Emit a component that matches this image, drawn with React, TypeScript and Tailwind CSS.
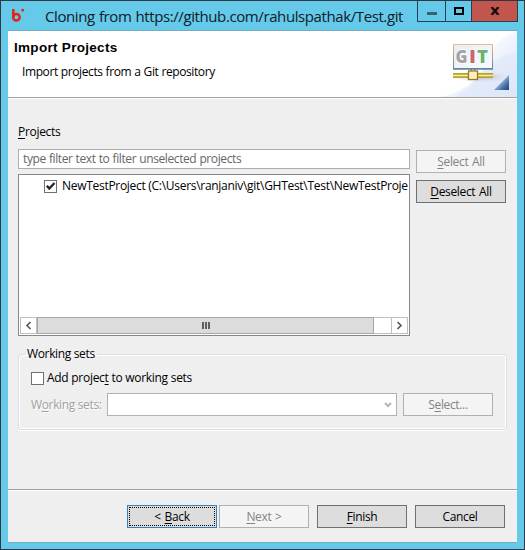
import type { ReactNode } from "react";

function Btn({ children, disabled = false, focus = false }: { children: ReactNode; disabled?: boolean; focus?: boolean }) {
  const tone = disabled
    ? "border-[#adb2b5] bg-[#f4f4f4] text-[#838383]"
    : focus
      ? "border-[#3c7fb1] bg-[#dddddd] text-black"
      : "border-[#707070] bg-[#dddddd] text-black";
  return (
    <button className={`relative flex h-[23px] w-[90px] shrink-0 items-center justify-center border ${tone}`}>
      {focus && <span className="absolute inset-px border border-dotted border-black" />}
      <span className="whitespace-pre tracking-[-0.35px] [word-spacing:1px]">{children}</span>
    </button>
  );
}

const U = ({ children }: { children: ReactNode }) => (
  <span className="underline decoration-1 underline-offset-2">{children}</span>
);

function Check({ checked = false }: { checked?: boolean }) {
  return (
    <span className="flex h-[13px] w-[13px] shrink-0 items-center justify-center border border-[#707070] bg-white">
      {checked && (
        <svg width="11" height="11" viewBox="0 0 11 11">
          <path d="M1.8 4.7 4.3 7.5 9.5 2" fill="none" stroke="#222" strokeWidth="2.3" />
        </svg>
      )}
    </span>
  );
}

function TitleBar() {
  return (
    <header className="flex h-[29px] items-start">
      <svg className="ml-[9px] mt-[7px] shrink-0" width="18" height="16" viewBox="0 0 18 16">
        <path d="M3.3 1v8.5" stroke="#e1251b" strokeWidth="2.6" />
        <circle cx="6.4" cy="9.2" r="3.3" fill="none" stroke="#e1251b" strokeWidth="2.5" />
        <circle cx="12.7" cy="2.2" r="1.4" fill="#e1251b" />
      </svg>
      <h1 className="ml-[17px] mt-[5px] w-[372px] whitespace-nowrap text-[15px] leading-[20px] tracking-[-0.4px] text-[#10202a] [word-spacing:0.6px]">
        Cloning from https://github.com/rahulspathak/Test.git
      </h1>
      <div className="flex h-[21px] w-[101px] shrink-0 border-x border-b border-[#26404d]">
        <div className="flex w-[27px] justify-center pt-[11px]">
          <i className="h-[3px] w-[10px] bg-[#356373]" />
        </div>
        <div className="flex w-[26px] justify-center border-l border-[#26404d] pt-[6px]">
          <i className="h-[8px] w-[10px] border-2 border-black" />
        </div>
        <div className="flex w-[46px] justify-center border-l border-[#26404d] bg-[#c2564f] pt-[6px]">
          <svg width="10" height="8" viewBox="0 0 10 8">
            <path d="M1.5 0 8.5 8M8.5 0 1.5 8" stroke="#111" strokeWidth="2.4" />
          </svg>
        </div>
      </div>
    </header>
  );
}

function GitBanner() {
  return (
    <svg className="shrink-0" width="77" height="66" viewBox="440 31 77 66">
      <defs>
        <linearGradient id="sky" x1="0" y1="0" x2="1" y2="1">
          <stop offset="0.3" stopColor="#fff" />
          <stop offset="0.65" stopColor="#eaeffa" />
          <stop offset="1" stopColor="#e2e9f8" />
        </linearGradient>
        <linearGradient id="frame" x1="0" y1="0" x2="0" y2="1">
          <stop offset="0" stopColor="#edbd80" />
          <stop offset="1" stopColor="#608698" />
        </linearGradient>
        <linearGradient id="pane" x1="0" y1="0" x2="1" y2="1">
          <stop offset="0" stopColor="#e4edf7" />
          <stop offset="1" stopColor="#f9fbfe" />
        </linearGradient>
        <linearGradient id="corner" x1="0" y1="0" x2="1" y2="1">
          <stop offset="0.3" stopColor="#b8dcf0" />
          <stop offset="0.75" stopColor="#4169a3" />
          <stop offset="1" stopColor="#24447c" />
        </linearGradient>
        <radialGradient id="shade">
          <stop offset="0" stopColor="#b8b4c6" />
          <stop offset="1" stopColor="#dfe3f0" stopOpacity="0" />
        </radialGradient>
      </defs>
      <path d="M517 31Q498 38 490 52Q480 89 440 97H517Z" fill="url(#sky)" />
      <path d="M517 51Q500 55 488 66Q474 86 455 97H517Z" fill="#d8e2f5" opacity=".35" />
      <ellipse cx="482" cy="77" rx="31" ry="6" fill="url(#shade)" />
      <rect x="453.5" y="44.5" width="39" height="24" fill="url(#pane)" stroke="url(#frame)" />
      <path d="M453 69H493" stroke="#638796" strokeWidth="1.4" />
      <g fontFamily="Open Sans, sans-serif" fontSize="17" fontWeight="800" stroke="#fff" strokeWidth="1.5" paintOrder="stroke">
        <text x="455.5" y="63" fill="#a3a3a5" textLength="12" lengthAdjust="spacingAndGlyphs">G</text>
        <text x="469" y="63" fill="#c9676e" textLength="7" lengthAdjust="spacingAndGlyphs">I</text>
        <text x="477" y="63" fill="#6bb373" textLength="11" lengthAdjust="spacingAndGlyphs">T</text>
      </g>
      <path d="M453 75.5H493" stroke="#b5a52c" strokeWidth="5" />
      <path d="M453 75.5H493" stroke="#f7efa0" strokeWidth="1.5" />
      <path d="M471 69V72M475 69V72" stroke="#4e7970" />
      <rect x="468.5" y="71" width="9" height="8.5" fill="#fff0bc" stroke="#9b762f" strokeWidth="1.3" />
      <path d="M509 75V90H494Z" fill="url(#corner)" />
    </svg>
  );
}

export default function App() {
  return (
    <div className="h-[550px] w-[525px] overflow-hidden border border-[#303942] bg-[#65c9e9] font-['Open_Sans','Noto_Sans',sans-serif] text-[12px] leading-[16px] text-black">
      <TitleBar />
      <main className="mx-[7px] flex h-[513px] flex-col border-y border-[#76abc0] bg-[#efefef]">
        <section className="flex h-[67px] justify-between border-b border-[#a0a0a0] bg-white">
          <div className="pl-[6px] pt-[9px]">
            <h2 className="whitespace-nowrap font-['Liberation_Sans',Arial,sans-serif] text-[13.5px] font-bold leading-[16px] tracking-[0.3px]">Import Projects</h2>
            <p className="ml-[8px] mt-[8px] whitespace-nowrap tracking-[-0.4px] [word-spacing:0.3px]">Import projects from a Git repository</p>
          </div>
          <GitBanner />
        </section>
        <section className="h-[392px] border-b border-[#a0a0a0] border-t border-t-white pl-[10px]">
          <div className="pt-[25px] tracking-[-0.3px]"><U>P</U>rojects</div>
          <div className="mt-[9px] flex gap-[6px]">
            <div className="flex w-[392px] flex-col gap-[5px]">
              <div className="h-[20px] border border-[#abadb3] bg-white pl-[4px] pt-px text-[#666] tracking-[-0.4px] [word-spacing:0.4px]">
                type filter text to filter unselected projects
              </div>
              <div className="flex h-[162px] flex-col justify-between border border-[#828790] bg-white p-px">
                <div className="flex items-center gap-[5px] overflow-hidden pl-[24px] pt-[2px]">
                  <Check checked />
                  <span className="whitespace-nowrap tracking-[-0.29px]">NewTestProject (C:\Users\ranjaniv\git\GHTest\Test\NewTestProje</span>
                </div>
                <div className="flex h-[17px]">
                  <div className="flex w-[17px] items-center justify-center border border-[#c0c0c0]">
                    <svg width="7" height="9" viewBox="0 0 7 9"><path d="M5.5 1 2 4.5 5.5 8" fill="none" stroke="#555" strokeWidth="1.6" /></svg>
                  </div>
                  <div className="flex w-[337px] items-center justify-center gap-px border border-[#a6a6a6] bg-[#dcdcdc]">
                    <i className="h-[7px] w-[2px] bg-[#606060]" />
                    <i className="h-[7px] w-[2px] bg-[#606060]" />
                    <i className="h-[7px] w-[2px] bg-[#606060]" />
                  </div>
                  <div className="w-[17px] border-y border-[#c0c0c0]" />
                  <div className="flex w-[17px] items-center justify-center border border-[#c0c0c0]">
                    <svg width="7" height="9" viewBox="0 0 7 9"><path d="M1.5 1 5 4.5 1.5 8" fill="none" stroke="#555" strokeWidth="1.6" /></svg>
                  </div>
                </div>
              </div>
            </div>
            <div className="flex flex-col gap-[7px] pt-px">
              <Btn disabled><U>S</U>elect All</Btn>
              <Btn><U>D</U>eselect All</Btn>
            </div>
          </div>
          <fieldset className="mt-[10px] h-[84px] w-[489px] rounded-[3px] border border-[#d5dfe5] px-[12px] shadow-[inset_0_0_0_1px_#fff,0_1px_0_#fff]">
            <legend className="-ml-[6px] px-[2px] tracking-[-0.35px]">Working sets</legend>
            <div className="mt-[8px] flex h-[16px] items-center gap-[3px]">
              <Check />
              <span className="tracking-[-0.28px]">Add projec<U>t</U> to working sets</span>
            </div>
            <div className="mt-[7px] flex h-[23px] items-center">
              <span className="w-[76px] shrink-0 whitespace-nowrap pt-px tracking-[-0.35px] text-[#a0a0a0] [text-shadow:1px_1px_0_#fff]">W<U>o</U>rking sets:</span>
              <div className="mr-[6px] flex h-[23px] w-[290px] shrink-0 items-center justify-end border border-[#b2b2b2] bg-white pr-[4px]">
                <svg width="8" height="8" viewBox="0 0 8 8"><path d="M1 2 4 5 7 2" fill="none" stroke="#b5b5b5" strokeWidth="2" /></svg>
              </div>
              <Btn disabled>S<U>e</U>lect...</Btn>
            </div>
          </fieldset>
        </section>
        <footer className="flex border-t border-white pl-[119px] pt-[14px]">
          <Btn focus>{"< "}<U>B</U>ack</Btn>
          <div className="ml-[2px] mr-[8px]"><Btn disabled><U>N</U>ext {">"}</Btn></div>
          <div className="mr-[8px]"><Btn><U>F</U>inish</Btn></div>
          <Btn>Cancel</Btn>
        </footer>
      </main>
    </div>
  );
}
